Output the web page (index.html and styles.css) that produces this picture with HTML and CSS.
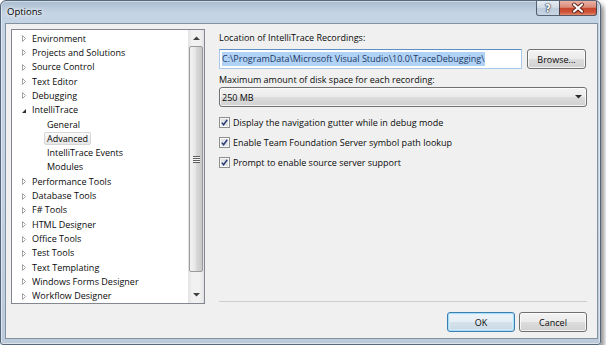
FILE: index.html
```html
<!DOCTYPE html>
<html lang="en">
<head>
    <meta charset="UTF-8">
    <title>Options</title>
    <link rel="stylesheet" href="styles.css">
</head>
<body>
    <div class="window">
        <div class="titlebar">
            <span class="title">Options</span>
            <div class="caption-buttons">
                <span class="cap-btn help">?</span>
                <span class="cap-btn close">
                    <svg width="36" height="14" viewBox="0 0 36 14">
                        <path d="M14 3.5 L22 10.5 M22 3.5 L14 10.5" stroke="#5b2116" stroke-width="4" stroke-linecap="round"/>
                        <path d="M14 3.5 L22 10.5 M22 3.5 L14 10.5" stroke="#fff" stroke-width="2.2" stroke-linecap="round"/>
                    </svg>
                </span>
            </div>
        </div>

        <div class="client">
            <div class="tree">
                <ul class="tree-list">
                    <li><svg class="twisty" viewBox="0 0 12 14"><path d="M2.5 4.5 L5.5 7.5 L2.5 10.5 Z" fill="#fff" stroke="#a2a2a2"/></svg>Environment</li>
                    <li><svg class="twisty" viewBox="0 0 12 14"><path d="M2.5 4.5 L5.5 7.5 L2.5 10.5 Z" fill="#fff" stroke="#a2a2a2"/></svg>Projects and Solutions</li>
                    <li><svg class="twisty" viewBox="0 0 12 14"><path d="M2.5 4.5 L5.5 7.5 L2.5 10.5 Z" fill="#fff" stroke="#a2a2a2"/></svg>Source Control</li>
                    <li><svg class="twisty" viewBox="0 0 12 14"><path d="M2.5 4.5 L5.5 7.5 L2.5 10.5 Z" fill="#fff" stroke="#a2a2a2"/></svg>Text Editor</li>
                    <li><svg class="twisty" viewBox="0 0 12 14"><path d="M2.5 4.5 L5.5 7.5 L2.5 10.5 Z" fill="#fff" stroke="#a2a2a2"/></svg>Debugging</li>
                    <li><svg class="twisty" viewBox="0 0 12 14"><path d="M6 6 L6 10 L2 10 Z" fill="#2e2e2e"/></svg>IntelliTrace</li>
                    <li class="child"><span class="leaf">General</span></li>
                    <li class="child"><span class="leaf selected">Advanced</span></li>
                    <li class="child"><span class="leaf">IntelliTrace Events</span></li>
                    <li class="child"><span class="leaf">Modules</span></li>
                    <li><svg class="twisty" viewBox="0 0 12 14"><path d="M2.5 4.5 L5.5 7.5 L2.5 10.5 Z" fill="#fff" stroke="#a2a2a2"/></svg>Performance Tools</li>
                    <li><svg class="twisty" viewBox="0 0 12 14"><path d="M2.5 4.5 L5.5 7.5 L2.5 10.5 Z" fill="#fff" stroke="#a2a2a2"/></svg>Database Tools</li>
                    <li><svg class="twisty" viewBox="0 0 12 14"><path d="M2.5 4.5 L5.5 7.5 L2.5 10.5 Z" fill="#fff" stroke="#a2a2a2"/></svg>F# Tools</li>
                    <li><svg class="twisty" viewBox="0 0 12 14"><path d="M2.5 4.5 L5.5 7.5 L2.5 10.5 Z" fill="#fff" stroke="#a2a2a2"/></svg>HTML Designer</li>
                    <li><svg class="twisty" viewBox="0 0 12 14"><path d="M2.5 4.5 L5.5 7.5 L2.5 10.5 Z" fill="#fff" stroke="#a2a2a2"/></svg>Office Tools</li>
                    <li><svg class="twisty" viewBox="0 0 12 14"><path d="M2.5 4.5 L5.5 7.5 L2.5 10.5 Z" fill="#fff" stroke="#a2a2a2"/></svg>Test Tools</li>
                    <li><svg class="twisty" viewBox="0 0 12 14"><path d="M2.5 4.5 L5.5 7.5 L2.5 10.5 Z" fill="#fff" stroke="#a2a2a2"/></svg>Text Templating</li>
                    <li><svg class="twisty" viewBox="0 0 12 14"><path d="M2.5 4.5 L5.5 7.5 L2.5 10.5 Z" fill="#fff" stroke="#a2a2a2"/></svg>Windows Forms Designer</li>
                    <li><svg class="twisty" viewBox="0 0 12 14"><path d="M2.5 4.5 L5.5 7.5 L2.5 10.5 Z" fill="#fff" stroke="#a2a2a2"/></svg>Workflow Designer</li>
                </ul>
                <div class="scrollbar">
                    <div class="sb-btn">
                        <svg width="7" height="4" viewBox="0 0 7 4"><path d="M0 4 L3.5 0.5 L7 4 Z" fill="#3f3f3f"/></svg>
                    </div>
                    <div class="sb-track">
                        <div class="sb-thumb"><span class="grip"></span></div>
                    </div>
                    <div class="sb-btn">
                        <svg width="7" height="4" viewBox="0 0 7 4"><path d="M0 0 L7 0 L3.5 3.5 Z" fill="#3f3f3f"/></svg>
                    </div>
                </div>
            </div>

            <div class="page">
                <div class="label">Location of IntelliTrace Recordings:</div>
                <div class="path-row">
                    <div class="path"><span class="sel-text">C:\ProgramData\Microsoft Visual Studio\10.0\TraceDebugging\</span></div>
                    <div class="btn browse">Browse...</div>
                </div>
                <div class="label second">Maximum amount of disk space for each recording:</div>
                <div class="combo">
                    <span>250 MB</span>
                    <svg width="7" height="4" viewBox="0 0 7 4"><path d="M0 0 L7 0 L3.5 3.5 Z" fill="#2b2b2b"/></svg>
                </div>
                <div class="checks">
                    <div class="check">
                        <svg class="box" width="11" height="11" viewBox="0 0 11 11"><rect x="0.5" y="0.5" width="10" height="10" fill="#f4f4f4" stroke="#8e8f8f"/><rect x="1.5" y="1.5" width="8" height="8" fill="#e2e4e8" stroke="#f9f9f9"/><path d="M2.8 5.6 L4.6 7.8 L8.2 2.8" fill="none" stroke="#2d3f78" stroke-width="1.5"/></svg>
                        Display the navigation gutter while in debug mode
                    </div>
                    <div class="check">
                        <svg class="box" width="11" height="11" viewBox="0 0 11 11"><rect x="0.5" y="0.5" width="10" height="10" fill="#f4f4f4" stroke="#8e8f8f"/><rect x="1.5" y="1.5" width="8" height="8" fill="#e2e4e8" stroke="#f9f9f9"/><path d="M2.8 5.6 L4.6 7.8 L8.2 2.8" fill="none" stroke="#2d3f78" stroke-width="1.5"/></svg>
                        Enable Team Foundation Server symbol path lookup
                    </div>
                    <div class="check">
                        <svg class="box" width="11" height="11" viewBox="0 0 11 11"><rect x="0.5" y="0.5" width="10" height="10" fill="#f4f4f4" stroke="#8e8f8f"/><rect x="1.5" y="1.5" width="8" height="8" fill="#e2e4e8" stroke="#f9f9f9"/><path d="M2.8 5.6 L4.6 7.8 L8.2 2.8" fill="none" stroke="#2d3f78" stroke-width="1.5"/></svg>
                        Prompt to enable source server support
                    </div>
                </div>
                <div class="spacer"></div>
                <div class="separator"></div>
            </div>

            <div class="buttons">
                <div class="btn default">OK</div>
                <div class="btn">Cancel</div>
            </div>
        </div>
    </div>
</body>
</html>
```

FILE: styles.css
```css
body {
    margin: 0;
    background: #fff;
    font-family: "Open Sans", "Noto Sans", sans-serif;
    font-size: 9px;
    color: #0a0a0a;
}
.window {
    width: 601px;
    height: 345px;
    box-sizing: border-box;
    border: 1px solid #56677a;
    border-radius: 6px 6px 3px 3px;
    background: linear-gradient(180deg, #a9bccf 0, #c5d4e4 12px, #c3d2e2 60%, #bccadb 100%);
    box-shadow: 3px 4px 5px rgba(0,0,0,0.45), inset 0 0 0 1px rgba(255,255,255,0.45);
    display: flex;
    flex-direction: column;
}
.titlebar {
    height: 22px;
    display: flex;
    align-items: flex-start;
    padding-left: 6px;
}
.title {
    line-height: 21px;
    font-size: 9.5px;
    color: #000;
    text-shadow: 0 0 5px #fff, 0 0 3px rgba(255,255,255,0.9);
}
.caption-buttons {
    margin-left: auto;
    margin-right: 3px;
    display: flex;
}
.cap-btn {
    height: 15px;
    box-sizing: border-box;
    border: 1px solid rgba(40,55,75,0.75);
    border-top: none;
    display: flex;
    align-items: center;
    justify-content: center;
}
.help {
    width: 23px;
    border-right: none;
    border-radius: 0 0 0 3px;
    background: linear-gradient(#e6ecf2, #d0dae5 50%, #bccada 50%, #c9d5e2);
    color: #fff;
    font-family: "DejaVu Sans", sans-serif;
    font-weight: bold;
    font-size: 10px;
    text-shadow: 0 0 1px #2a3340, 0 0 1px #2a3340, 0 0 2px #2a3340;
}
.close {
    width: 38px;
    border-radius: 0 0 3px 0;
    background: linear-gradient(#ebb3a6, #da8a77 45%, #c7472e 52%, #cf5438 80%, #e08a6c);
}

/* client area */
.client {
    flex: 1;
    margin: 0 2px 5px 4px;
    border: 1px solid #82939f;
    background: #f0f0f0;
    padding: 5px 10px 6px 5px;
    display: grid;
    grid-template-columns: 194px 1fr;
    grid-template-rows: 275px auto;
    column-gap: 14px;
    row-gap: 8px;
}

/* tree */
.tree {
    border: 1px solid #828790;
    background: #fff;
    display: flex;
    overflow: hidden;
}
.tree-list {
    flex: 1;
    list-style: none;
    margin: 0;
    padding: 1px 0 0;
    overflow: hidden;
}
.tree-list li {
    height: 14.32px;
    display: flex;
    align-items: center;
    padding-left: 8px;
    white-space: nowrap;
}
.twisty {
    width: 12px;
    height: 14px;
    flex: none;
}
.tree-list li.child {
    padding-left: 32px;
}
.leaf {
    padding: 0 2px;
    border: 1px solid transparent;
    border-radius: 2px;
    line-height: 11px;
}
.leaf.selected {
    background: linear-gradient(#fbfbfb, #e6e6e6);
    border-color: #d6d6d6;
}
.scrollbar {
    width: 16px;
    display: flex;
    flex-direction: column;
    background: linear-gradient(90deg, #e2e2e2, #f1f1f1 25%, #f1f1f1 75%, #e2e2e2);
}
.sb-btn {
    height: 16px;
    display: flex;
    align-items: center;
    justify-content: center;
}
.sb-track {
    flex: 1;
}
.sb-thumb {
    height: 226px;
    margin: 0 1px;
    box-sizing: border-box;
    border: 1px solid #9a9a9a;
    border-radius: 2px;
    background: linear-gradient(90deg, #f3f3f3, #e6e6e6 45%, #d8d8d8 55%, #c9c9c9);
    display: flex;
    align-items: center;
    justify-content: center;
}
.grip {
    width: 7px;
    height: 7px;
    background: repeating-linear-gradient(180deg, #5e5e5e 0, #5e5e5e 1px, #f4f4f4 1px, #f4f4f4 2px);
}

/* options page */
.page {
    display: flex;
    flex-direction: column;
}
.label {
    line-height: 14px;
    margin-top: 2px;
}
.label.second {
    margin-top: 4px;
}
.path-row {
    display: flex;
    gap: 5px;
    height: 20px;
    margin-top: 4px;
}
.path {
    width: 303px;
    box-sizing: border-box;
    border: 1px solid #a9c9ea;
    border-top-color: #5c8fc4;
    background: #fff;
    padding: 0 2px;
    display: flex;
    align-items: center;
    white-space: nowrap;
    overflow: hidden;
}
.sel-text {
    background: #b0d3f5;
    color: #1f3865;
    line-height: 14px;
}
.btn {
    box-sizing: border-box;
    height: 20px;
    border: 1px solid #707070;
    border-radius: 3px;
    background: linear-gradient(#f3f3f3, #ebebeb 50%, #dddddd 50%, #d0d0d0);
    box-shadow: inset 0 0 0 1px rgba(255,255,255,0.75);
    display: flex;
    align-items: center;
    justify-content: center;
}
.browse {
    width: 59px;
}
.combo {
    box-sizing: border-box;
    height: 20px;
    border: 1px solid #707070;
    border-radius: 3px;
    background: linear-gradient(#f3f3f3, #ebebeb 50%, #dddddd 50%, #d0d0d0);
    box-shadow: inset 0 0 0 1px rgba(255,255,255,0.75);
    display: flex;
    align-items: center;
    justify-content: space-between;
    padding: 0 4px 0 2px;
}
.checks {
    margin-top: 5px;
}
.check {
    height: 20px;
    display: flex;
    align-items: center;
    gap: 3px;
}
.box {
    flex: none;
}
.spacer {
    flex: 1;
}
.separator {
    height: 1px;
    background: #cdcdcd;
    margin-bottom: 2px;
}

/* dialog buttons */
.buttons {
    grid-column: 1 / -1;
    display: flex;
    justify-content: flex-end;
    gap: 4px;
}
.buttons .btn {
    width: 68px;
}
.btn.default {
    border-color: #3c7fb1;
    box-shadow: inset 0 0 0 1px rgba(160,220,250,0.9), inset 0 0 0 2px rgba(220,240,252,0.6);
    background: linear-gradient(#eef5fa, #e5eef5 50%, #d5e2ec 50%, #cad9e5);
}
```
